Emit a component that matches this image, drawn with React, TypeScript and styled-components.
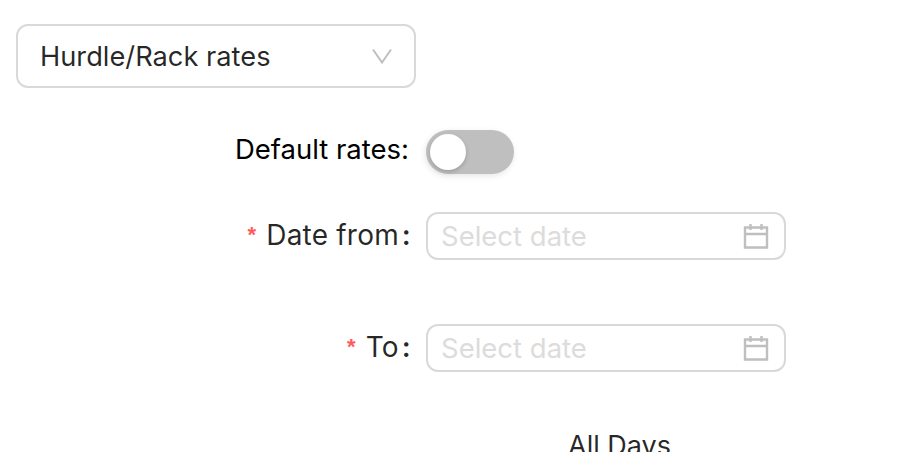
import styled, { createGlobalStyle } from 'styled-components'

const GlobalStyle = createGlobalStyle`
  html, body {
    margin: 0;
    height: 452px;
    overflow: hidden;
    background: #fff;
    font-family: 'Inter', 'Liberation Sans', sans-serif;
  }
`

const Page = styled.div`
  padding: 24px 16px 0;
  height: 428px;
  overflow: hidden;
`

const RateSelect = styled.div`
  box-sizing: border-box;
  width: 400px;
  height: 64px;
  display: flex;
  align-items: center;
  justify-content: space-between;
  padding: 0 22px 0 22px;
  border: 2px solid #d9d9d9;
  border-radius: 12px;
  font-size: 27.25px;
  color: rgba(0, 0, 0, 0.85);
`

const Chevron = styled.svg`
  width: 20px;
  height: 16px;
  fill: none;
  stroke: #bfbfbf;
  stroke-width: 2;
`

const Form = styled.div`
  display: flex;
  flex-direction: column;
  margin-top: 42px;
`

const Row = styled.div<{ $height: number; $gap: number }>`
  display: grid;
  grid-template-columns: 394px 1fr;
  column-gap: 16px;
  align-items: center;
  height: ${p => p.$height}px;
  margin-bottom: ${p => p.$gap}px;
`

const Label = styled.label`
  display: flex;
  justify-content: flex-end;
  align-items: center;
  padding-bottom: 3px;
  font-size: 28px;
  letter-spacing: 0.2px;
  color: rgba(0, 0, 0, 0.85);
`

const PlainLabel = styled(Label)`
  padding: 0 1px 6px 0;
  font-size: 27.5px;
  letter-spacing: 0;
  color: #000;
`

const Star = styled.span`
  color: #ff5a5c;
  font-size: 22px;
  font-weight: 700;
  margin-right: 10px;
  font-family: 'Liberation Sans', sans-serif;
`

const Colon = styled.span`
  margin: 0 -1px 0 3px;
  font-weight: 600;
`

const Toggle = styled.div`
  box-sizing: border-box;
  width: 88px;
  height: 44px;
  padding: 4px;
  border-radius: 22px;
  background: #bfbfbf;
  box-shadow: -1px 2px 6px rgba(0, 0, 0, 0.1);
`

const Knob = styled.div`
  width: 36px;
  height: 36px;
  border-radius: 50%;
  background: #fff;
  box-shadow: 0 2px 4px rgba(0, 35, 11, 0.2);
`

const DateBox = styled.div`
  box-sizing: border-box;
  width: 360px;
  height: 48px;
  display: flex;
  align-items: center;
  justify-content: space-between;
  padding: 0 15px 0 13px;
  border: 2px solid #d9d9d9;
  border-radius: 12px;
`

const Placeholder = styled.span`
  font-size: 27.5px;
  color: #dcdcdc;
`

const CalendarIcon = styled.svg`
  width: 26px;
  height: 26px;
  fill: none;
  stroke: #bfbfbf;
  stroke-width: 2.4;
`

const DaysHeading = styled.div`
  margin-left: 552px;
  font-size: 27px;
  line-height: 32px;
  color: rgba(0, 0, 0, 0.85);
`

function Calendar() {
  return (
    <CalendarIcon viewBox="0 0 26 26">
      <path d="M2 4.5h22v20H2z" />
      <path d="M2 11h22M7.5 1v6M18.5 1v6" />
    </CalendarIcon>
  )
}

export default function App() {
  return (
    <Page>
      <GlobalStyle />
      <RateSelect>
        Hurdle/Rack rates
        <Chevron viewBox="0 0 20 16">
          <path d="M1 1.5l9 13 9-13" />
        </Chevron>
      </RateSelect>
      <Form>
        <Row $height={44} $gap={38}>
          <PlainLabel>Default rates:</PlainLabel>
          <Toggle>
            <Knob />
          </Toggle>
        </Row>
        <Row $height={48} $gap={64}>
          <Label>
            <Star>*</Star>Date from<Colon>:</Colon>
          </Label>
          <DateBox>
            <Placeholder>Select date</Placeholder>
            <Calendar />
          </DateBox>
        </Row>
        <Row $height={48} $gap={58}>
          <Label>
            <Star>*</Star>To<Colon>:</Colon>
          </Label>
          <DateBox>
            <Placeholder>Select date</Placeholder>
            <Calendar />
          </DateBox>
        </Row>
        <DaysHeading>All Days</DaysHeading>
      </Form>
    </Page>
  )
}
